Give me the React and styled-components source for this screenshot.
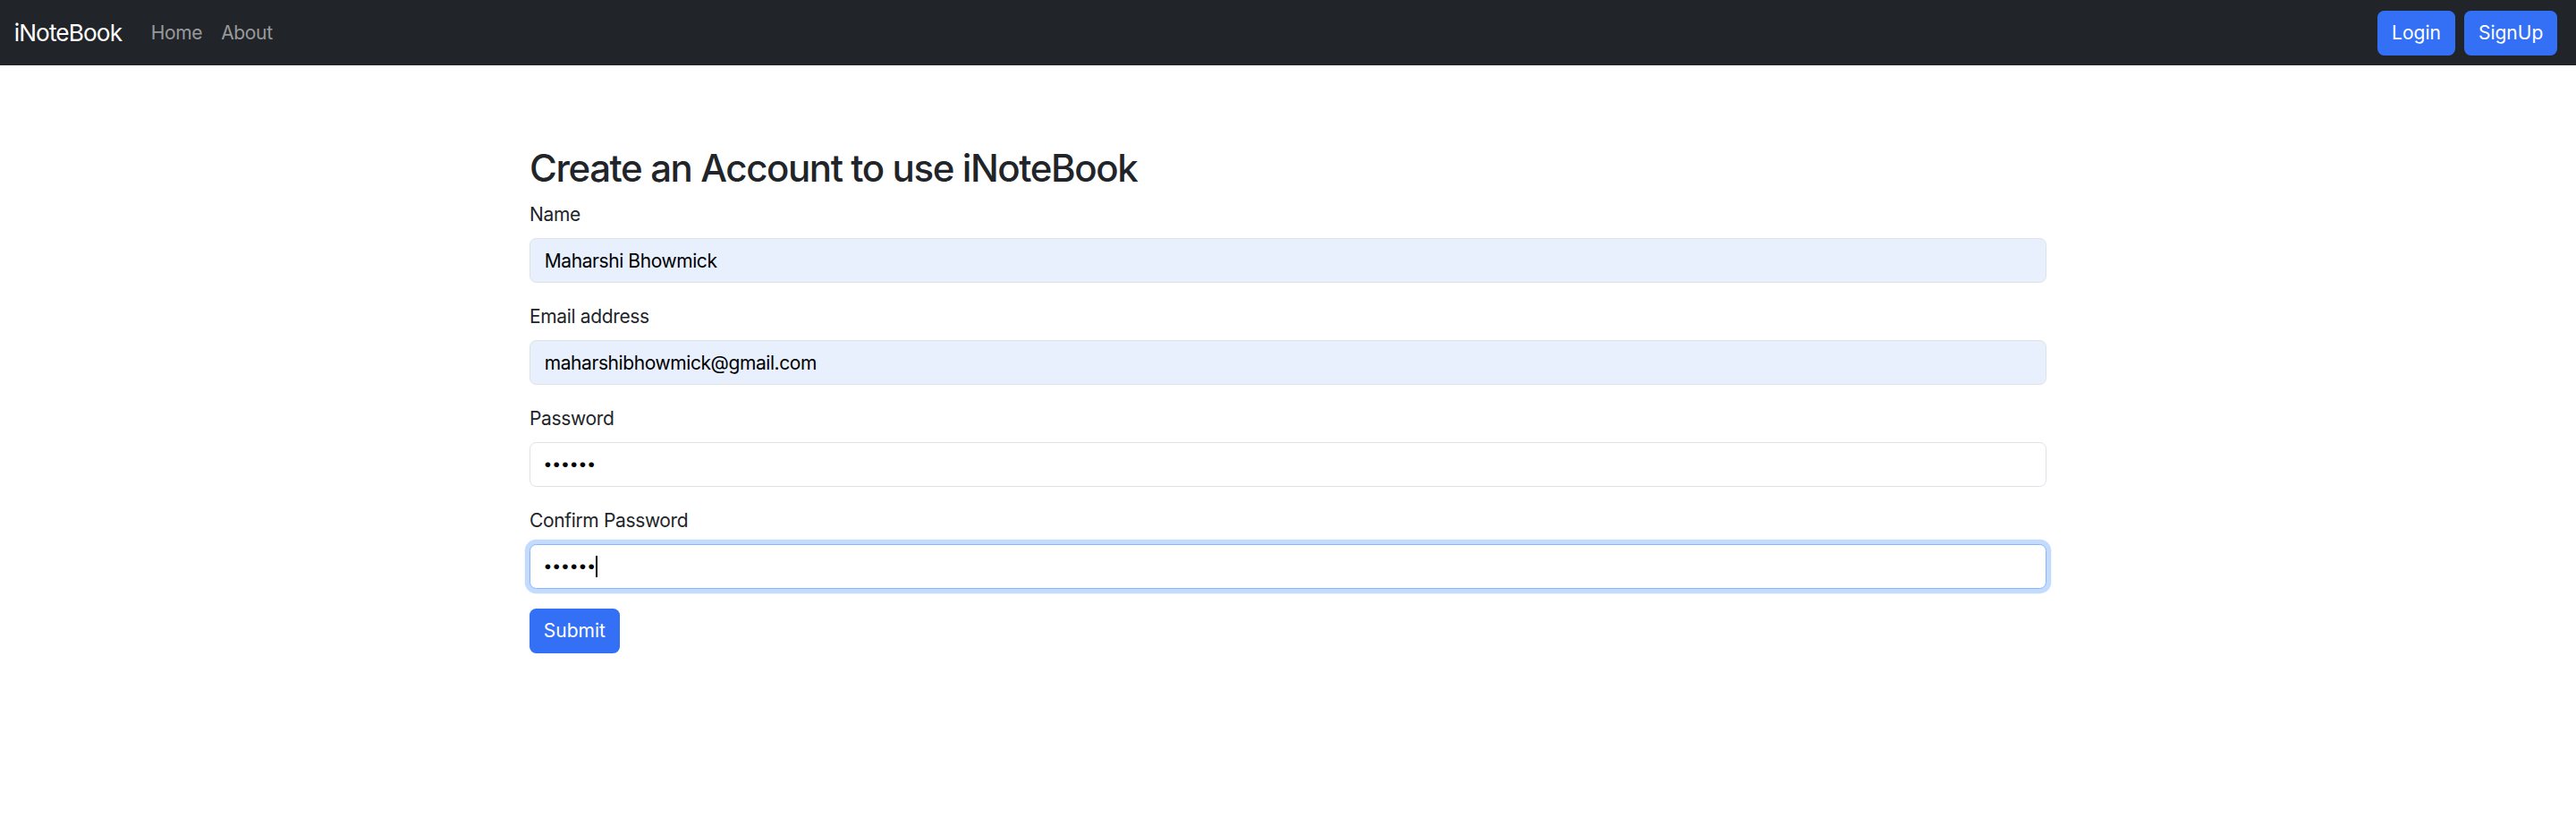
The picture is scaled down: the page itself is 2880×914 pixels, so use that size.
import styled, { createGlobalStyle } from "styled-components";

const GlobalStyle = createGlobalStyle`
  * {
    box-sizing: border-box;
  }
  body {
    margin: 0;
    font-family: Inter, "Liberation Sans", sans-serif;
    font-size: 21px;
    line-height: 1.5;
    letter-spacing: -0.35px;
    color: #212529;
    background: #fff;
  }
`;

const Navbar = styled.nav`
  height: 73px;
  background-color: #212428;
  display: flex;
  align-items: center;
  justify-content: space-between;
  padding: 0 15.75px;
`;

const NavLeft = styled.div`
  display: flex;
  align-items: center;
`;

const Brand = styled.a`
  font-size: 26.25px;
  color: #fff;
  text-decoration: none;
  margin-right: 22px;
  letter-spacing: -0.9px;
`;

const NavLink = styled.a`
  color: rgba(255, 255, 255, 0.55);
  text-decoration: none;
  padding: 0 10.5px;
  font-size: 21px;
`;

const NavRight = styled.div`
  display: flex;
  align-items: center;
`;

const Button = styled.button`
  height: 50px;
  padding: 0 15.75px;
  margin: ${(p) => (p.$nav ? "0 5.25px" : "0")};
  font-family: inherit;
  font-size: 21px;
  letter-spacing: 0;
  color: #fff;
  background-color: #3470f6;
  border: none;
  border-radius: 7.5px;
  cursor: pointer;
`;

const Container = styled.div`
  width: 1696px;
  margin: 90px auto 0;
`;

const Title = styled.h2`
  margin: 0 0 10.5px;
  font-size: 42px;
  font-weight: 500;
  line-height: 1.2;
  letter-spacing: -1.4px;
`;

const Form = styled.form`
  display: flex;
  flex-direction: column;
  align-items: flex-start;
`;

const Field = styled.div`
  width: 100%;
  margin-bottom: 21.5px;
`;

const Label = styled.label`
  display: block;
  margin-bottom: 11px;
  line-height: 31.5px;
`;

const InputWrap = styled.div`
  position: relative;
`;

const Input = styled.input`
  display: block;
  width: 100%;
  height: 50px;
  padding: 0 15.75px;
  font-family: ${(p) =>
    p.type === "password" ? '"Liberation Sans", sans-serif' : "inherit"};
  font-size: 21px;
  letter-spacing: ${(p) => (p.type === "password" ? "2.4px" : "-0.42px")};
  color: #000;
  background-color: ${(p) => (p.$filled ? "#e8f0fe" : "#fff")};
  border: 1.3px solid ${(p) => (p.$focused ? "#86b7fe" : "#dee2e6")};
  border-radius: 7.5px;
  outline: none;
  box-shadow: ${(p) =>
    p.$focused ? "0 0 0 5.25px rgba(13, 110, 253, 0.25)" : "none"};
  caret-color: transparent;
`;

const Caret = styled.span`
  position: absolute;
  left: 74px;
  top: 13px;
  width: 2px;
  height: 24px;
  background: #000;
  pointer-events: none;
`;

const fields = [
  { id: "name", label: "Name", type: "text", value: "Maharshi Bhowmick", filled: true },
  { id: "email", label: "Email address", type: "email", value: "maharshibhowmick@gmail.com", filled: true },
  { id: "password", label: "Password", type: "password", value: "123456" },
  { id: "cpassword", label: "Confirm Password", type: "password", value: "123456", focused: true },
];

function App() {
  return (
    <>
      <GlobalStyle />
      <Navbar>
        <NavLeft>
          <Brand href="#">iNoteBook</Brand>
          <NavLink href="#">Home</NavLink>
          <NavLink href="#">About</NavLink>
        </NavLeft>
        <NavRight>
          <Button $nav>Login</Button>
          <Button $nav>SignUp</Button>
        </NavRight>
      </Navbar>
      <Container>
        <Title>Create an Account to use iNoteBook</Title>
        <Form onSubmit={(e) => e.preventDefault()}>
          {fields.map((f) => (
            <Field key={f.id}>
              <Label htmlFor={f.id}>{f.label}</Label>
              <InputWrap>
                <Input
                  id={f.id}
                  type={f.type}
                  defaultValue={f.value}
                  $filled={f.filled}
                  $focused={f.focused}
                />
                {f.focused && <Caret />}
              </InputWrap>
            </Field>
          ))}
          <Button type="submit">Submit</Button>
        </Form>
      </Container>
    </>
  );
}

export default App;
